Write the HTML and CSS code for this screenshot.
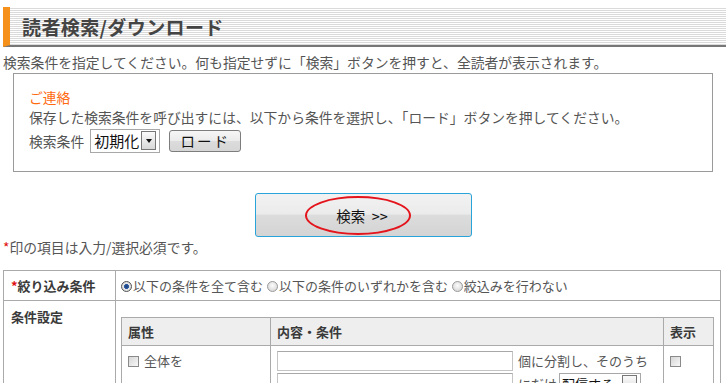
FILE: index.html
```html
<!DOCTYPE html>
<html lang="ja">
<head>
<meta charset="utf-8">
<link rel="stylesheet" href="styles.css">
</head>
<body>
<div class="page">
  <h1 class="title"><span>読者検索/ダウンロード</span></h1>
  <p class="lead">検索条件を指定してください。何も指定せずに「検索」ボタンを押すと、全読者が表示されます。</p>
  <div class="notice">
    <div class="notice-head">ご連絡</div>
    <div class="notice-text">保存した検索条件を呼び出すには、以下から条件を選択し、「ロード」ボタンを押してください。</div>
    <div class="load-row">
      <span class="load-label">検索条件</span>
      <span class="select"><span class="select-value">初期化</span><span class="select-arrow"></span></span>
      <span class="btn-load">ロード</span>
    </div>
  </div>
  <div class="search-wrap">
    <div class="btn-search"><span class="btn-search-label">検索&nbsp; &gt;&gt;</span><span class="ring"></span></div>
  </div>
  <p class="required-note"><span class="req">*</span>印の項目は入力/選択必須です。</p>
  <table class="form">
    <tr class="row-filter">
      <th class="label"><span class="req">*</span>絞り込み条件</th>
      <td class="radios">
        <span class="radio on"></span>以下の条件を全て含む
        <span class="radio"></span>以下の条件のいずれかを含む
        <span class="radio"></span>絞込みを行わない
      </td>
    </tr>
    <tr class="row-cond">
      <th class="label">条件設定</th>
      <td class="cond-cell">
        <table class="inner">
          <tr class="inner-head">
            <th class="c-attr">属性</th>
            <th class="c-content">内容・条件</th>
            <th class="c-show">表示</th>
          </tr>
          <tr class="inner-row">
            <td class="c-attr"><span class="check"></span><span class="check-label">全体を</span></td>
            <td class="c-content">
              <div class="split">
                <div class="inputs">
                  <span class="text-input"></span>
                  <span class="text-input"></span>
                </div>
                <div class="split-text">
                  <div>個に分割し、そのうち</div>
                  <div class="only-row">にだけ <span class="select small"><span class="select-value">配信する</span><span class="select-arrow"></span></span></div>
                </div>
              </div>
            </td>
            <td class="c-show"><span class="check"></span></td>
          </tr>
        </table>
      </td>
    </tr>
  </table>
</div>
</body>
</html>
```
FILE: styles.css
```css
html, body {
  margin: 0;
  padding: 0;
  background: #fff;
}
body {
  font-family: "Noto Sans CJK JP", "Noto Sans", sans-serif;
  color: #555;
  font-size: 13.8px;
}
.page {
  padding: 7px 3px 0 3px;
  width: 720px;
}
.title {
  margin: 0 -3px 0 0;
  height: 38px;
  border-left: 7px solid #f5901a;
  border-bottom: 2px solid #777;
  background: repeating-linear-gradient(to bottom, #fff 0, #fff 1px, #dadada 1px, #dadada 2px);
  padding-left: 12px;
  display: flex;
  align-items: center;
  font-size: 19px;
  font-weight: bold;
  color: #444;
  letter-spacing: 0.4px;
}
.lead {
  margin: 5px 0 0 0;
  line-height: 20px;
  white-space: nowrap;
}
.notice {
  margin: 1px 0 0 10px;
  width: 700px;
  box-sizing: border-box;
  border: 1px solid #9a9a9a;
  padding: 13px 15px 19px 15px;
}
.notice-head {
  color: #ff6a10;
  line-height: 20px;
}
.notice-text {
  line-height: 20px;
  white-space: nowrap;
}
.load-row {
  margin-top: 2px;
  display: flex;
  align-items: center;
  height: 23px;
}
.load-label {
  margin-right: 6px;
}
.select {
  display: inline-flex;
  align-items: center;
  height: 24px;
  box-sizing: border-box;
  border: 1px solid #a8a8a8;
  padding: 0 3px 0 3px;
  color: #111;
  font-size: 15px;
  background: #fff;
}
.select-value {
  margin-right: 2px;
}
.select-arrow {
  width: 15px;
  height: 19px;
  box-sizing: border-box;
  border: 1px solid #777;
  background: linear-gradient(#fafafa, #d8d8d8);
  position: relative;
}
.select-arrow::after {
  content: "";
  position: absolute;
  left: 3.5px;
  top: 7px;
  border-left: 3.5px solid transparent;
  border-right: 3.5px solid transparent;
  border-top: 4px solid #111;
}
.btn-load {
  margin-left: 9px;
  width: 72px;
  height: 22px;
  box-sizing: border-box;
  border: 1px solid #7d7d7d;
  border-radius: 3px;
  background: linear-gradient(#f6f6f6 0%, #ebebeb 50%, #dcdcdc 51%, #d6d6d6 100%);
  display: flex;
  align-items: center;
  justify-content: center;
  color: #111;
  font-size: 14.5px;
  letter-spacing: 2px;
}
.search-wrap {
  margin-top: 21px;
  display: flex;
  justify-content: center;
}
.btn-search {
  position: relative;
  width: 217px;
  height: 44px;
  box-sizing: border-box;
  border: 1px solid #2aa3d8;
  border-radius: 3px;
  background: linear-gradient(#f2f2f2 0%, #ebebeb 48%, #dcdcdc 50%, #d4d4d4 100%);
  display: flex;
  align-items: center;
  justify-content: center;
  color: #111;
  font-size: 14.5px;
}
.btn-search-label {
  margin-right: 2px;
}
.ring {
  position: absolute;
  left: 49px;
  top: 2px;
  width: 106px;
  height: 39px;
  box-sizing: border-box;
  border: 2px solid #e4141c;
  border-radius: 50%;
}
.required-note {
  margin: 0;
  line-height: 20px;
}
.req {
  color: #e01010;
}
.form {
  margin-top: 13px;
  width: 718px;
  border-collapse: collapse;
  font-size: 13px;
}
.form > tbody > tr > th,
.form > tbody > tr > td {
  border: 1px solid #aaa;
}
.label {
  width: 112px;
  box-sizing: border-box;
  text-align: left;
  padding: 0 7px;
  color: #3a3a3a;
  font-weight: bold;
  white-space: nowrap;
}
.row-filter {
  height: 30px;
}
.row-filter .label {
  vertical-align: middle;
}
.radios {
  padding: 0 4px;
  white-space: nowrap;
  color: #555;
}
.radio {
  display: inline-block;
  width: 11px;
  height: 11px;
  box-sizing: border-box;
  border-radius: 50%;
  border: 1px solid #9a9a9a;
  background: radial-gradient(circle at 50% 40%, #fcfcfc, #cfcfcf);
  vertical-align: -1px;
  margin-right: 1px;
  margin-left: 1px;
}
.radio.on {
  background: radial-gradient(circle, #1d3f7a 0, #2c5aa0 2.2px, #e6e6e6 2.8px, #cfcfcf 100%);
  border-color: #555;
}
.row-cond .label {
  vertical-align: top;
  padding-top: 6px;
  line-height: 20px;
}
.cond-cell {
  padding: 16px 6px 0 5px;
  vertical-align: top;
}
.inner {
  width: 100%;
  border-collapse: collapse;
}
.inner th,
.inner td {
  border: 1px solid #aaa;
  text-align: left;
  vertical-align: top;
}
.inner-head th {
  background: #eeeeee;
  height: 27px;
  vertical-align: middle;
  padding: 0 6px;
  font-weight: bold;
  color: #3a3a3a;
}
.c-attr {
  width: 149px;
  box-sizing: border-box;
}
.c-show {
  width: 50px;
  box-sizing: border-box;
}
.inner-row td {
  padding: 5px 6px 0 6px;
  height: 60px;
}
.inner-row .c-attr {
  padding-left: 6px;
}
.check {
  display: inline-block;
  width: 11px;
  height: 11px;
  box-sizing: border-box;
  border: 1px solid #8a8a8a;
  background: linear-gradient(135deg, #d6d6d6, #f8f8f8);
  vertical-align: -1px;
}
.check-label {
  margin-left: 5px;
}
.split {
  display: flex;
  gap: 5px;
}
.inputs {
  display: flex;
  flex-direction: column;
  gap: 2px;
}
.text-input {
  display: block;
  width: 236px;
  height: 20px;
  box-sizing: border-box;
  border: 1px solid #c4c4c4;
  border-top-color: #a8a8a8;
  background: #fff;
}
.split-text {
  line-height: 20px;
  white-space: nowrap;
}
.only-row {
  margin-top: 2px;
  display: flex;
  align-items: center;
  gap: 2px;
}
.select.small {
  height: 22px;
  font-size: 13px;
  padding-left: 2px;
}
.select.small .select-value {
  margin-right: 8px;
}
```
